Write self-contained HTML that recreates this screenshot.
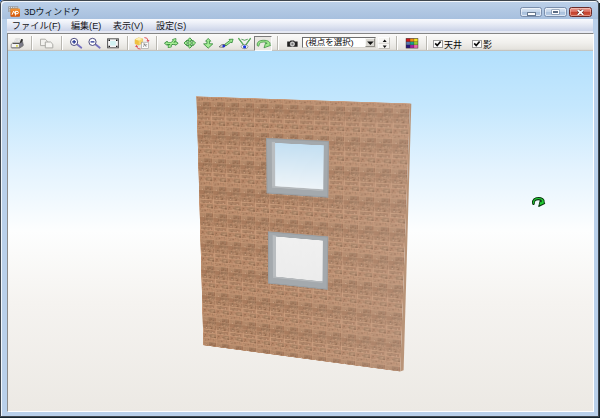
<!DOCTYPE html>
<html lang="ja"><head><meta charset="utf-8"><title>3Dウィンドウ</title>
<style>
html,body{margin:0;padding:0}
body{width:600px;height:418px;overflow:hidden;background:#16262e;position:relative;font-family:"Liberation Sans",sans-serif;font-size:9px}
.abs{position:absolute}
.vh{position:absolute;left:0;top:0;width:1px;height:1px;overflow:hidden;clip-path:inset(50%);white-space:nowrap;color:transparent;font-size:1px}
#win{position:absolute;left:0;top:0;width:599.4px;height:417.4px;border-radius:4px 4px 0 0;
 background:#b9d0ea;overflow:hidden}
#frame{position:absolute;left:0;top:0;width:599.4px;height:417.4px;border-radius:4px 4px 0 0;box-shadow:inset 0 0 0 1px #3f464e,inset 2px 2px 0 0 rgba(255,255,255,.8);pointer-events:none}
#title{position:absolute;left:0;top:0;width:600px;height:19px;background:linear-gradient(#bed2ea 0,#b3c9e4 45%,#a7c0de 100%)}
#menubar{position:absolute;left:7px;top:18.8px;width:586px;height:12.4px;background:linear-gradient(#f8f9fd 0,#edf0f8 30%,#dce2f0 65%,#cbd3e8 100%)}
#menugap{position:absolute;left:7px;top:31.2px;width:586px;height:2px;background:#e6e9f3}
#client{position:absolute;left:6.6px;top:32.6px;width:587.1px;height:379.5px;box-sizing:border-box;border:1px solid;border-color:#858585 #fff #fff #8c8c8c;background:#fff}
#toolbar{position:absolute;left:7.6px;top:33.6px;width:585.1px;height:17.2px;background:linear-gradient(#fbfaf9 0,#f1f0ed 50%,#e4e2dd 90%,#b9b7b2 100%)}
#view{position:absolute;left:7.6px;top:50.8px;width:585.1px;height:360.7px;background:linear-gradient(#b3e0fd 0,#c4e7fd 15%,#e4f3fe 33%,#fdfefe 50%,#f5f3f0 70%,#ece9e4 100%)}
.wall{position:absolute;left:0;top:0;width:216px;height:258px;transform-origin:0 0}
.wall svg{display:block}
.sep{position:absolute;top:36px;height:14px;width:1px;background:#b9b7b1;box-shadow:1px 0 0 #fff}
.pressed{position:absolute;box-sizing:border-box;background:#e9e7e2;border:1px solid;border-color:#7c7c7c #fbfbfb #fbfbfb #7c7c7c}
.combo{position:absolute;box-sizing:border-box;background:#fff;border:1px solid;border-color:#6e6e6e #d8d6d0 #d8d6d0 #6e6e6e}
.combo .dd{position:absolute;right:0;top:.400px;width:10.6px;height:9.1px;box-sizing:border-box;background:#dad8d2;border:1px solid;border-color:#f6f6f4 #8f8d87 #8f8d87 #f6f6f4}
.spin{position:absolute;box-sizing:border-box;background:#f7f6f3;border:1px solid;border-color:#fdfdfd #c3c1bb #c3c1bb #fdfdfd}
.cb{position:absolute;width:9.6px;height:8px;box-sizing:border-box;background:#fff;border:1px solid #9c9c9c}
.wb{position:absolute;top:6.6px;height:10.8px;box-sizing:border-box;border:1px solid #7a8eac;border-radius:2.5px;
 background:linear-gradient(#dbe6f3 0,#c3d4e9 48%,#a9c0dc 52%,#b9cde6 100%);box-shadow:inset 0 0 0 1px rgba(255,255,255,.55)}
.wb.close{border-color:#6a2a28;background:linear-gradient(#e9a196 0,#d8685a 48%,#c2402e 52%,#cf5a40 100%);box-shadow:inset 0 0 0 1px rgba(255,220,210,.45)}
.min{position:absolute;left:6.3px;top:4.7px;width:7.6px;height:1.9px;background:#fff;border:.400px solid #66788f;border-radius:.500px}
.max{position:absolute;left:6.9px;top:2.1px;width:7px;height:4px;box-sizing:border-box;border:1.1px solid #fff;box-shadow:0 0 0 .500px #66788f;background:#5b6c84}
.lbl svg text{font-family:"Liberation Sans","Noto Sans CJK JP",sans-serif}
</style></head>
<body>
<div class="abs" style="left:0;top:0;width:3px;height:3px;background:#1a5fc8"></div><div class="abs" style="right:0;top:0;width:3px;height:3px;background:#f4f4f4"></div>
<div id="win">
<div id="title"><div class="wb" style="left:519.5px;width:22.2px"><div class="min"></div></div><div class="wb" style="left:544.2px;width:22.5px"><div class="max"></div></div><div class="wb close" style="left:569.2px;width:23.3px"><svg width="23" height="10" viewBox="0 0 23 10" style="position:absolute;left:0;top:0" aria-hidden="true"><path d="M7.7 2l5.6 4.8M13.3 2l-5.6 4.8" stroke="#5a1a14" stroke-width="2.8"/><path d="M7.7 2l5.6 4.8M13.3 2l-5.6 4.8" stroke="#fff" stroke-width="1.7"/></svg></div></div>
<div id="menubar"></div><div id="menugap"></div>
<div id="client"></div>
<div id="toolbar"></div>
<div id="view"></div>
<svg class="abs" style="left:0;top:0" width="600" height="418" viewBox="0 0 600 418" aria-hidden="true"><polygon points="409.9,103.4 411.3,103.7 403.6,370.2 400.2,371.6" fill="#b99478"/></svg>
<div class="wall" style="width:444.0px;height:528.0px;transform:matrix3d(0.41904212,-0.0025855527,0,-0.00018395298,0.045014225,0.53632796,0,0.00015571915,0,0,1,0,196.3,96.3,0,1) translate(-6px,-6px)"><svg width="444.0" height="528.0" viewBox="-3 -3 222.0 264.0" aria-hidden="true"><defs><pattern id="bk" width="15.4" height="27.6" patternUnits="userSpaceOnUse"><rect width="15.4" height="27.6" fill="rgb(176,132,100)"/><rect x="-0.11" y="0.0" width="7.81" height="4.6" fill="rgb(176,132,101)"/><rect x="7.7" y="0.0" width="7.59" height="4.6" fill="rgb(180,133,100)"/><rect x="15.29" y="0.0" width="7.81" height="4.6" fill="rgb(178,135,103)"/><rect x="12.0" y="0.52" width="1.76" height="1.78" fill="rgb(183,140,108)" opacity="0.77"/><rect x="5.5" y="1.74" width="2.23" height="0.87" fill="rgb(145,99,70)" opacity="0.9"/><rect x="8.83" y="2.85" width="2.25" height="1.37" fill="rgb(190,146,113)" opacity="0.72"/><rect x="9.86" y="1.75" width="1.78" height="1.82" fill="rgb(189,139,106)" opacity="0.61"/><rect x="11.43" y="1.94" width="2.13" height="1.24" fill="rgb(158,120,91)" opacity="0.67"/><rect x="14.71" y="3.08" width="2.38" height="0.86" fill="rgb(154,112,82)" opacity="0.82"/><rect x="5.88" y="2.13" width="1.33" height="0.9" fill="rgb(141,99,71)" opacity="0.93"/><rect x="11.43" y="0.6" width="0.92" height="1.31" fill="rgb(143,103,74)" opacity="0.81"/><rect x="2.09" y="1.93" width="1.51" height="1.23" fill="rgb(149,115,86)" opacity="0.5"/><rect x="13.18" y="3.51" width="0.93" height="1.01" fill="rgb(203,162,128)" opacity="0.77"/><rect x="8.46" y="0.34" width="1.31" height="1.65" fill="rgb(154,111,82)" opacity="0.63"/><rect x="0.2" y="0.51" width="1.49" height="1.48" fill="rgb(159,113,83)" opacity="0.76"/><rect x="12.65" y="0.66" width="1.15" height="1.8" fill="rgb(184,143,111)" opacity="0.61"/><rect x="2.11" y="2.71" width="1.52" height="1.33" fill="rgb(143,98,70)" opacity="0.52"/><rect x="0.79" y="1.94" width="2.03" height="1.08" fill="rgb(185,144,112)" opacity="0.77"/><rect y="-0.3" width="15.4" height="0.65" fill="rgb(206,156,122)" opacity="0.42"/><rect x="7.4" y="0.0" width="0.65" height="4.6" fill="rgb(206,156,122)" opacity="0.34"/><rect x="14.99" y="0.0" width="0.65" height="4.6" fill="rgb(206,156,122)" opacity="0.48"/><rect x="-1.54" y="4.6" width="8.2" height="4.6" fill="rgb(182,139,106)"/><rect x="6.67" y="4.6" width="7.2" height="4.6" fill="rgb(164,125,95)"/><rect x="13.86" y="4.6" width="8.2" height="4.6" fill="rgb(161,114,84)"/><rect x="3.41" y="6.32" width="1.35" height="1.38" fill="rgb(158,122,93)" opacity="0.54"/><rect x="1.27" y="6.33" width="2.01" height="1.44" fill="rgb(195,145,111)" opacity="0.52"/><rect x="-0.71" y="7.89" width="0.93" height="1.5" fill="rgb(203,155,121)" opacity="0.83"/><rect x="4.23" y="8.2" width="1.49" height="0.85" fill="rgb(149,113,84)" opacity="0.83"/><rect x="1.12" y="8.08" width="2.0" height="1.79" fill="rgb(188,147,114)" opacity="0.69"/><rect x="11.96" y="7.74" width="1.51" height="1.44" fill="rgb(145,106,77)" opacity="0.54"/><rect x="9.49" y="8.18" width="1.52" height="1.61" fill="rgb(197,152,118)" opacity="0.7"/><rect x="12.75" y="5.08" width="1.04" height="0.82" fill="rgb(152,117,87)" opacity="0.55"/><rect x="11.79" y="7.04" width="0.92" height="1.13" fill="rgb(186,143,110)" opacity="0.59"/><rect x="1.78" y="7.88" width="1.29" height="1.25" fill="rgb(191,143,110)" opacity="0.79"/><rect x="12.18" y="7.37" width="1.52" height="1.44" fill="rgb(138,97,69)" opacity="0.56"/><rect x="7.14" y="7.65" width="2.42" height="1.1" fill="rgb(142,99,70)" opacity="0.7"/><rect x="3.51" y="5.53" width="1.73" height="1.54" fill="rgb(189,146,113)" opacity="0.88"/><rect x="9.25" y="5.89" width="1.87" height="1.55" fill="rgb(153,109,80)" opacity="0.66"/><rect x="9.65" y="6.72" width="1.2" height="1.65" fill="rgb(150,106,77)" opacity="0.85"/><rect y="4.3" width="15.4" height="0.65" fill="rgb(206,156,122)" opacity="0.55"/><rect x="6.37" y="4.6" width="0.65" height="4.6" fill="rgb(206,156,122)" opacity="0.55"/><rect x="13.56" y="4.6" width="0.65" height="4.6" fill="rgb(206,156,122)" opacity="0.33"/><rect x="-0.94" y="9.2" width="7.77" height="4.6" fill="rgb(168,121,90)"/><rect x="6.83" y="9.2" width="7.63" height="4.6" fill="rgb(162,123,93)"/><rect x="14.46" y="9.2" width="7.77" height="4.6" fill="rgb(164,124,94)"/><rect x="11.38" y="11.22" width="1.34" height="1.18" fill="rgb(155,116,87)" opacity="0.73"/><rect x="9.08" y="11.97" width="2.02" height="1.05" fill="rgb(200,152,118)" opacity="0.9"/><rect x="5.36" y="10.93" width="2.36" height="1.21" fill="rgb(144,105,77)" opacity="0.9"/><rect x="12.07" y="12.61" width="2.47" height="0.91" fill="rgb(187,147,114)" opacity="0.86"/><rect x="14.16" y="9.82" width="2.47" height="1.88" fill="rgb(138,99,71)" opacity="0.86"/><rect x="4.25" y="12.49" width="1.03" height="1.28" fill="rgb(151,111,82)" opacity="0.85"/><rect x="6.99" y="9.5" width="0.96" height="1.39" fill="rgb(149,111,82)" opacity="0.91"/><rect x="6.72" y="12.8" width="1.69" height="1.84" fill="rgb(202,150,116)" opacity="0.6"/><rect x="7.64" y="10.39" width="2.25" height="1.42" fill="rgb(147,104,76)" opacity="0.67"/><rect x="12.86" y="12.46" width="1.13" height="1.4" fill="rgb(152,109,79)" opacity="0.72"/><rect x="5.74" y="9.79" width="0.94" height="1.87" fill="rgb(145,105,77)" opacity="0.68"/><rect x="12.14" y="11.31" width="1.17" height="1.82" fill="rgb(182,137,105)" opacity="0.91"/><rect x="12.13" y="10.77" width="1.1" height="1.28" fill="rgb(148,111,83)" opacity="0.91"/><rect x="6.82" y="10.48" width="0.95" height="1.09" fill="rgb(149,111,82)" opacity="0.94"/><rect x="-0.42" y="9.93" width="1.42" height="1.19" fill="rgb(143,105,76)" opacity="0.55"/><rect y="8.9" width="15.4" height="0.65" fill="rgb(206,156,122)" opacity="0.53"/><rect x="6.53" y="9.2" width="0.65" height="4.6" fill="rgb(206,156,122)" opacity="0.33"/><rect x="14.16" y="9.2" width="0.65" height="4.6" fill="rgb(206,156,122)" opacity="0.43"/><rect x="-1.16" y="13.8" width="8.26" height="4.6" fill="rgb(168,124,93)"/><rect x="7.1" y="13.8" width="7.14" height="4.6" fill="rgb(167,125,94)"/><rect x="14.24" y="13.8" width="8.26" height="4.6" fill="rgb(159,114,84)"/><rect x="9.35" y="16.17" width="1.88" height="1.74" fill="rgb(139,97,69)" opacity="0.83"/><rect x="12.29" y="17.07" width="2.33" height="1.01" fill="rgb(194,151,118)" opacity="0.59"/><rect x="0.59" y="17.02" width="1.32" height="0.91" fill="rgb(142,106,78)" opacity="0.69"/><rect x="11.95" y="14.43" width="2.18" height="0.91" fill="rgb(195,149,116)" opacity="0.66"/><rect x="12.46" y="15.23" width="2.0" height="1.01" fill="rgb(192,141,108)" opacity="0.55"/><rect x="-0.39" y="15.88" width="1.2" height="1.02" fill="rgb(183,142,110)" opacity="0.95"/><rect x="14.2" y="14.32" width="1.99" height="0.89" fill="rgb(156,110,80)" opacity="0.68"/><rect x="5.99" y="15.21" width="0.92" height="1.57" fill="rgb(145,109,81)" opacity="0.58"/><rect x="6.44" y="16.51" width="1.87" height="0.9" fill="rgb(202,158,124)" opacity="0.65"/><rect x="0.39" y="16.86" width="1.21" height="1.44" fill="rgb(193,145,112)" opacity="0.84"/><rect x="3.58" y="14.4" width="1.55" height="1.79" fill="rgb(140,105,77)" opacity="0.81"/><rect x="11.58" y="16.6" width="1.2" height="1.68" fill="rgb(184,137,105)" opacity="0.55"/><rect x="13.56" y="17.37" width="2.41" height="1.53" fill="rgb(154,111,81)" opacity="0.8"/><rect x="8.34" y="15.81" width="1.7" height="1.03" fill="rgb(192,142,108)" opacity="0.68"/><rect x="8.43" y="14.39" width="1.31" height="1.24" fill="rgb(142,97,68)" opacity="0.59"/><rect y="13.5" width="15.4" height="0.65" fill="rgb(206,156,122)" opacity="0.44"/><rect x="6.8" y="13.8" width="0.65" height="4.6" fill="rgb(206,156,122)" opacity="0.32"/><rect x="13.94" y="13.8" width="0.65" height="4.6" fill="rgb(206,156,122)" opacity="0.36"/><rect x="-6.63" y="18.4" width="7.61" height="4.6" fill="rgb(185,140,108)"/><rect x="0.97" y="18.4" width="7.79" height="4.6" fill="rgb(185,142,109)"/><rect x="8.77" y="18.4" width="7.61" height="4.6" fill="rgb(180,131,99)"/><rect x="8.8" y="21.18" width="2.4" height="1.22" fill="rgb(150,115,86)" opacity="0.89"/><rect x="7.89" y="20.63" width="1.57" height="1.38" fill="rgb(202,156,122)" opacity="0.66"/><rect x="3.69" y="20.83" width="2.1" height="0.83" fill="rgb(195,153,119)" opacity="0.76"/><rect x="9.38" y="19.99" width="1.4" height="1.24" fill="rgb(181,137,105)" opacity="0.83"/><rect x="4.24" y="21.31" width="1.66" height="1.87" fill="rgb(149,106,77)" opacity="0.74"/><rect x="14.37" y="21.06" width="2.44" height="1.07" fill="rgb(183,141,108)" opacity="0.52"/><rect x="5.84" y="19.0" width="1.15" height="1.2" fill="rgb(151,106,77)" opacity="0.69"/><rect x="8.86" y="20.77" width="2.09" height="1.7" fill="rgb(188,139,106)" opacity="0.63"/><rect x="1.11" y="20.24" width="1.9" height="1.2" fill="rgb(198,149,115)" opacity="0.81"/><rect x="8.26" y="20.61" width="1.2" height="1.07" fill="rgb(198,157,123)" opacity="0.91"/><rect x="13.41" y="18.73" width="1.32" height="0.83" fill="rgb(159,112,82)" opacity="0.6"/><rect x="3.56" y="21.17" width="1.91" height="1.21" fill="rgb(146,106,77)" opacity="0.59"/><rect x="4.64" y="21.13" width="1.62" height="1.7" fill="rgb(140,105,77)" opacity="0.85"/><rect x="6.29" y="21.14" width="1.49" height="1.52" fill="rgb(199,158,124)" opacity="0.65"/><rect x="8.0" y="21.14" width="1.49" height="0.91" fill="rgb(149,113,84)" opacity="0.54"/><rect y="18.1" width="15.4" height="0.65" fill="rgb(206,156,122)" opacity="0.37"/><rect x="0.67" y="18.4" width="0.65" height="4.6" fill="rgb(206,156,122)" opacity="0.44"/><rect x="8.47" y="18.4" width="0.65" height="4.6" fill="rgb(206,156,122)" opacity="0.42"/><rect x="-7.26" y="23.0" width="7.33" height="4.6" fill="rgb(161,116,86)"/><rect x="0.07" y="23.0" width="8.07" height="4.6" fill="rgb(180,131,99)"/><rect x="8.14" y="23.0" width="7.33" height="4.6" fill="rgb(168,128,97)"/><rect x="10.38" y="24.16" width="1.95" height="1.16" fill="rgb(154,118,88)" opacity="0.65"/><rect x="6.23" y="25.22" width="2.18" height="1.14" fill="rgb(190,142,109)" opacity="0.68"/><rect x="14.33" y="26.24" width="2.23" height="0.83" fill="rgb(157,118,88)" opacity="0.76"/><rect x="12.06" y="25.71" width="1.76" height="1.72" fill="rgb(199,153,119)" opacity="0.58"/><rect x="11.45" y="26.2" width="1.25" height="0.86" fill="rgb(199,148,114)" opacity="0.63"/><rect x="-0.63" y="26.06" width="1.77" height="1.67" fill="rgb(181,132,100)" opacity="0.54"/><rect x="11.09" y="26.26" width="1.95" height="0.91" fill="rgb(159,121,91)" opacity="0.69"/><rect x="10.68" y="24.86" width="1.53" height="1.17" fill="rgb(198,157,123)" opacity="0.8"/><rect x="7.1" y="25.03" width="2.36" height="1.25" fill="rgb(143,107,78)" opacity="0.8"/><rect x="13.0" y="25.94" width="2.43" height="1.5" fill="rgb(138,99,71)" opacity="0.82"/><rect x="12.16" y="24.63" width="1.29" height="0.98" fill="rgb(201,156,122)" opacity="0.81"/><rect x="4.26" y="24.52" width="2.32" height="1.32" fill="rgb(186,144,111)" opacity="0.64"/><rect x="1.55" y="26.33" width="0.93" height="1.33" fill="rgb(141,105,77)" opacity="0.64"/><rect x="2.24" y="24.42" width="1.66" height="1.36" fill="rgb(145,104,76)" opacity="0.9"/><rect x="5.6" y="26.3" width="2.41" height="1.41" fill="rgb(195,153,119)" opacity="0.72"/><rect y="22.7" width="15.4" height="0.65" fill="rgb(206,156,122)" opacity="0.45"/><rect x="-0.23" y="23.0" width="0.65" height="4.6" fill="rgb(206,156,122)" opacity="0.54"/><rect x="7.84" y="23.0" width="0.65" height="4.6" fill="rgb(206,156,122)" opacity="0.47"/><rect x="0.9" y="18.9" width="13.6" height="3.6" fill="rgb(156,114,85)" opacity=".5" stroke="rgb(214,165,130)" stroke-width=".75"/><rect y="0" width="15.4" height="5.06" fill="rgb(204,156,122)" opacity=".2"/><rect y="5.52" width="15.4" height="4.6" fill="rgb(140,100,72)" opacity=".14"/><rect x="-0.1" width="0.8" height="27.6" fill="rgb(210,162,127)" opacity=".4"/><rect y="-0.1" width="15.4" height="0.9" fill="rgb(214,165,130)" opacity=".45"/><circle cx="4.2" cy="8.6" r="0.75" fill="#d8b092" opacity=".6"/><circle cx="4.4" cy="16.8" r="0.75" fill="#d8b092" opacity=".6"/><circle cx="11.6" cy="21.5" r="0.75" fill="#d8b092" opacity=".6"/></pattern></defs><rect width="216.0" height="258.0" fill="url(#bk)"/><linearGradient id="wl" x1="0" y1="0" x2="1" y2="0"><stop offset="0" stop-color="#c8b4ac" stop-opacity="0"/><stop offset=".45" stop-color="#c8b4ac" stop-opacity=".06"/><stop offset="1" stop-color="#ccb8b0" stop-opacity=".24"/></linearGradient><rect width="216.0" height="258.0" fill="url(#wl)"/><rect x="74.3" y="37.1" width="64.58" height="53.98" fill="#9a9fa3"/><rect x="75.5" y="38.3" width="62.18" height="51.58" fill="#a4a9ad"/><rect x="80.2" y="40.44" width="3.4" height="43.92" fill="#b9bdc0"/><rect x="80.2" y="83.36" width="53.45" height="1.6" fill="#b4b8bb"/><linearGradient id="g1" x1="0" y1="0" x2="0" y2="1"><stop offset="0" stop-color="#c3dff2"/><stop offset="1" stop-color="#eef4f8"/></linearGradient><rect x="83.6" y="41.44" width="50.05" height="41.92" fill="url(#g1)"/><rect x="75.45" y="128.93" width="63.92" height="53.73" fill="#9a9fa3"/><rect x="76.65" y="130.13" width="61.52" height="51.33" fill="#a4a9ad"/><rect x="80.64" y="132.51" width="3.4" height="43.04" fill="#b9bdc0"/><rect x="80.64" y="174.55" width="53.14" height="1.6" fill="#b4b8bb"/><linearGradient id="g2" x1="0" y1="0" x2="0" y2="1"><stop offset="0" stop-color="#f0f0f0"/><stop offset="1" stop-color="#ececec"/></linearGradient><rect x="84.04" y="133.51" width="49.74" height="41.04" fill="url(#g2)"/></svg></div>
<svg aria-hidden="true" style="position:absolute;left:531px;top:196px;overflow:visible" width="16" height="12" viewBox="531 196 16 12" ><g transform="translate(538.35 201.9) scale(0.91 1.18)"><path d="M-6.4 1 C-6.8-2-4.1-3.7 0-3.7 C4-3.7 7-2.2 6.4.4 L7 1.4 L.4 3.8 L2-1.1 L3.3-.2 C3.7-1.3 2.2-1.95 0-1.95 C-2.7-1.95-4.6-1-4.45 1.1 C-4.35 2.5-6.2 2.7-6.4 1Z" fill="#22cc33" stroke="#0a3a10" stroke-width="1.0" stroke-linejoin="round"/></g></svg>
<svg aria-hidden="true" style="position:absolute;left:8px;top:6px;overflow:visible" width="13" height="11" viewBox="8 6 13 11" ><rect x="8.4" y="6.4" width="9.8" height="5.6" fill="#8b8b8b"/><path d="M9.2 7.4h1M11 7.4h1M12.8 7.4h1M14.6 7.4h1M16.4 7.4h1M9.2 9.2h1M9.2 11h1" stroke="#eee" stroke-width="1"/><defs><linearGradient id="og" x1="0" y1="0" x2="0" y2="1"><stop offset="0" stop-color="#f59a3a"/><stop offset="1" stop-color="#d24e00"/></linearGradient></defs><rect x="10.4" y="8.4" width="9.6" height="8.4" rx="1" fill="url(#og)"/><path d="M12 14.8l1.6-3.6 1.2 2.4M15.4 11.4h1.6q1.4 0 1.4 1.2t-1.4 1.2h-1.6v-2.4v4.2" stroke="#fff" stroke-width="1" fill="none"/></svg><svg aria-hidden="true" style="position:absolute;left:10px;top:38px;overflow:visible" width="15" height="11" viewBox="10 38 15 11" ><path d="M11.6 48h8.2l3.6-2.4" stroke="#6a6a6a" stroke-width=".9" fill="none" opacity=".8"/><path d="M14.7 41.8l.9-3.1h4.3l-.7 3.1z" fill="#fff" stroke="#b4b4b4" stroke-width=".4"/><path d="M16 39.7h2.8M15.8 40.7h2.8" stroke="#aaa" stroke-width=".4"/><path d="M19.3 43.4l1.9-4.3 1.7.2-.2 1.8-1.5 2.7z" fill="#2e2e2e"/><path d="M19.4 43.4l3.2-1.7.8 3.5-4 2.4z" fill="#7c7c8a" stroke="#4a4a4a" stroke-width=".45"/><path d="M12.5 43.2l6.9.2v4.2h-8.2v-3.2z" fill="#f4f4f4" stroke="#5c5c5c" stroke-width=".6"/><path d="M12.7 43.3h6.7" stroke="#2c2c2c" stroke-width=".85"/><rect x="16.2" y="45" width="1.5" height="1.8" fill="#d8d030"/></svg><svg aria-hidden="true" style="position:absolute;left:39px;top:38px;overflow:visible" width="15" height="11" viewBox="39 38 15 11" ><path d="M40.5 39.2h4.8l2 2v4.4h-6.8z" fill="#f2f1ee" stroke="#a9a8a4" stroke-width=".9"/><path d="M45.3 42h5.3l2.2 2.2v3.7h-7.5z" fill="#f6f5f2" stroke="#a2a19d" stroke-width=".9"/></svg><svg aria-hidden="true" style="position:absolute;left:69px;top:37px;overflow:visible" width="15" height="13" viewBox="69 37 15 13" ><path d="M77.0 44.3l4.3 3.5" stroke="#7470c0" stroke-width="1.8" stroke-linecap="round"/><circle cx="74.1" cy="41.9" r="3.6" fill="#fff" stroke="#3a3a70" stroke-width=".9"/><path d="M72.19999999999999 41.9h3.8" stroke="#1c2a8c" stroke-width="1.2"/><path d="M74.1 40v3.8" stroke="#1c2a8c" stroke-width="1.2"/></svg><svg aria-hidden="true" style="position:absolute;left:87px;top:37px;overflow:visible" width="15" height="13" viewBox="87 37 15 13" ><path d="M95.4 44.3l4.3 3.5" stroke="#7470c0" stroke-width="1.8" stroke-linecap="round"/><circle cx="92.5" cy="41.9" r="3.6" fill="#fff" stroke="#3a3a70" stroke-width=".9"/><path d="M90.6 41.9h3.8" stroke="#1c2a8c" stroke-width="1.2"/></svg><svg aria-hidden="true" style="position:absolute;left:106px;top:37px;overflow:visible" width="14" height="12" viewBox="106 37 14 12" ><rect x="107.6" y="38.8" width="10.8" height="9" fill="#f6f6f6" stroke="#555" stroke-width="1"/><rect x="110.2" y="41" width="5.6" height="4.6" fill="#d2f2f2"/><path d="M108.5 39.6h1.5v1.3h-1.5zM116 39.6h1.5v1.3h-1.5zM108.5 45.7h1.5v1.3h-1.5zM116 45.7h1.5v1.3h-1.5z" fill="#1a1a1a"/></svg><svg aria-hidden="true" style="position:absolute;left:133px;top:36px;overflow:visible" width="18" height="15" viewBox="133 36 18 15" ><path d="M135 39.6l3.6-1.8 4 1v4.2l-3.8 2-3.8-1.2z" fill="#f6d66a" stroke="#d8aa30" stroke-width=".45"/><path d="M135 39.6l3.6-1.8 4 1-3.8 2z" fill="#fcefb4"/><path d="M135 39.6l3.8 1.2v4.2l-3.8-1.2z" fill="#f0c040"/><rect x="141.6" y="42.2" width="6.8" height="6.4" fill="#fcfcfc" stroke="#9a9a9a" stroke-width=".6"/><path d="M143.4 46.8l1.4-2.6 1.4 2.6M145.8 44.8h1.4M143.2 44h2" stroke="#555" stroke-width=".6" fill="none"/><path d="M144.4 37.6q3.2-.2 3.6 2.8" stroke="#e05862" stroke-width="1" fill="none"/><path d="M146.4 40.2h3.2l-1.6 1.9z" fill="#d83040"/><path d="M140.6 49q-3.4.4-4-2.6" stroke="#e05862" stroke-width="1" fill="none"/><path d="M135 46.8h3.2l-1.6-1.9z" fill="#d83040"/></svg><svg aria-hidden="true" style="position:absolute;left:164px;top:37px;overflow:visible" width="16" height="12" viewBox="164 37 16 12" ><polygon points="164.9,43.3 167.2,44.95 167.2,44.0 175.4,44.0 175.4,44.95 177.7,43.3 175.4,41.65 175.4,42.6 167.2,42.6 167.2,41.65" fill="none" stroke="#2c8534" stroke-width="1.3" stroke-linejoin="round"/><polygon points="168.4,47.4 171.15,46.73 170.43,46.11 174.73,41.1 175.45,41.72 175.7,38.9 172.95,39.57 173.67,40.19 169.37,45.2 168.65,44.58" fill="none" stroke="#2c8534" stroke-width="1.3" stroke-linejoin="round"/><polygon points="164.9,43.3 167.2,44.95 167.2,44.0 175.4,44.0 175.4,44.95 177.7,43.3 175.4,41.65 175.4,42.6 167.2,42.6 167.2,41.65" fill="#a4ec94" stroke="none" stroke-width="0.8" stroke-linejoin="round"/><polygon points="168.4,47.4 171.15,46.73 170.43,46.11 174.73,41.1 175.45,41.72 175.7,38.9 172.95,39.57 173.67,40.19 169.37,45.2 168.65,44.58" fill="#a4ec94" stroke="none" stroke-width="0.8" stroke-linejoin="round"/></svg><svg aria-hidden="true" style="position:absolute;left:183px;top:37px;overflow:visible" width="14" height="13" viewBox="183 37 14 13" ><polygon points="189.8,37.8 192.5,40.5 190.65,40.5 190.65,42.15 192.9,42.15 192.9,40.3 195.6,43.0 192.9,45.7 192.9,43.85 190.65,43.85 190.65,45.5 192.5,45.5 189.8,48.2 187.1,45.5 188.95,45.5 188.95,43.85 186.7,43.85 186.7,45.7 184.0,43.0 186.7,40.3 186.7,42.15 188.95,42.15 188.95,40.5 187.1,40.5" fill="#a4ec94" stroke="#2c8534" stroke-width="0.8" stroke-linejoin="round"/></svg><svg aria-hidden="true" style="position:absolute;left:202px;top:37px;overflow:visible" width="13" height="13" viewBox="202 37 13 13" ><polygon points="208.2,38.4 210.8,41.2 209.45,41.2 209.45,43.7 212.8,43.9 208.2,48.2 203.6,43.9 206.95,43.7 206.95,41.2 205.6,41.2" fill="#a4ec94" stroke="#2c8534" stroke-width="0.8" stroke-linejoin="round"/></svg><svg aria-hidden="true" style="position:absolute;left:218px;top:37px;overflow:visible" width="16" height="12" viewBox="218 37 16 12" ><polygon points="225.77,45.96 231.05,41.95 231.86,43.03 233.1,39.2 229.08,39.36 229.9,40.44 224.63,44.44" fill="#a4ec94" stroke="#2c8534" stroke-width="0.8" stroke-linejoin="round"/><path d="M219.3 46.9q3-4 6.5-1.5q-2.6 3-6.5 1.5z" fill="#fff" stroke="#444" stroke-width=".75"/><circle cx="223.7" cy="46.1" r="1.45" fill="#2030cc"/></svg><svg aria-hidden="true" style="position:absolute;left:237px;top:37px;overflow:visible" width="15" height="13" viewBox="237 37 15 13" ><path d="M238.4 38.2l5.8 7.6M250.7 38.2l-5.6 7.6" stroke="#2c8534" stroke-width="1.2" fill="none"/><path d="M238.4 38.2l5.8 7.6M250.7 38.2l-5.6 7.6" stroke="#a4ec94" stroke-width=".45" fill="none"/><path d="M241.4 39.2q3.2 2.2 6.4 0" stroke="#2c8534" stroke-width=".75" fill="none"/><ellipse cx="244.6" cy="46.7" rx="3.4" ry="2" fill="#fff" stroke="#666" stroke-width=".6"/><circle cx="244.6" cy="46.8" r="1.6" fill="#1838e0"/></svg><div class="pressed" style="left:254.2px;top:36.2px;width:17.8px;height:14.6px"></div><svg aria-hidden="true" style="position:absolute;left:255px;top:37px;overflow:visible" width="17" height="13" viewBox="255 37 17 13" ><g transform="translate(263.6 44) scale(1.0 1.0)"><path d="M-6.4 1 C-6.8-2-4.1-3.7 0-3.7 C4-3.7 7-2.2 6.4.4 L7 1.4 L.4 3.8 L2-1.1 L3.3-.2 C3.7-1.3 2.2-1.95 0-1.95 C-2.7-1.95-4.6-1-4.45 1.1 C-4.35 2.5-6.2 2.7-6.4 1Z" fill="#9ee88e" stroke="#2c8534" stroke-width="0.7" stroke-linejoin="round"/></g></svg><svg aria-hidden="true" style="position:absolute;left:286px;top:39px;overflow:visible" width="13" height="9" viewBox="286 39 13 9" ><path d="M287.2 41.4h2.6l.8-1h3.4l.8 1h2.8v5.4h-10.4z" fill="#222"/><circle cx="292.4" cy="44" r="2.2" fill="#b8b8b8" stroke="#eee" stroke-width=".6"/><circle cx="292.4" cy="44" r=".9" fill="#777"/></svg><div class="combo" style="left:302px;top:36.6px;width:74.2px;height:11.6px"><div class="dd"></div></div><svg aria-hidden="true" style="position:absolute;left:364px;top:38px;overflow:visible" width="12" height="10" viewBox="364 38 12 10" ><path d="M367.1 41.6h6.6l-3.3 3.5z" fill="#111"/></svg><div class="spin" style="left:378.2px;top:37.2px;width:12px;height:12px"></div><svg aria-hidden="true" style="position:absolute;left:378px;top:37px;overflow:visible" width="13" height="13" viewBox="378 37 13 13" ><path d="M382.7 42h4l-2-2.5zM382.7 45.4h4l-2 2.5z" fill="#111"/><path d="M378.6 43.3h11.2" stroke="#c8c6c0" stroke-width=".7"/></svg><svg aria-hidden="true" style="position:absolute;left:405px;top:38px;overflow:visible" width="14" height="11" viewBox="405 38 14 11" ><rect x="405.8" y="38.2" width="12.4" height="10.2" fill="#3a3030"/><rect x="406.3" y="38.7" width="3.6" height="2.9" fill="#d01818"/><rect x="410.2" y="38.7" width="3.6" height="2.9" fill="#f08a10"/><rect x="414.1" y="38.7" width="3.6" height="2.9" fill="#f0e020"/><rect x="406.3" y="41.85" width="3.6" height="2.9" fill="#5878b0"/><rect x="410.2" y="41.85" width="3.6" height="2.9" fill="#18a088"/><rect x="414.1" y="41.85" width="3.6" height="2.9" fill="#98c830"/><rect x="406.3" y="45.0" width="3.6" height="2.9" fill="#281878"/><rect x="410.2" y="45.0" width="3.6" height="2.9" fill="#a020a0"/><rect x="414.1" y="45.0" width="3.6" height="2.9" fill="#e868a8"/></svg><div class="cb" style="left:433.2px;top:39.6px"></div><svg aria-hidden="true" style="position:absolute;left:433.2px;top:39px;overflow:visible" width="10" height="10" viewBox="433.2 39 10 10" ><path d="M435.4 43.4l2 2.1 3.4-4" stroke="#0c0c0c" stroke-width="1.7" fill="none"/></svg><div class="cb" style="left:472.2px;top:39.6px"></div><svg aria-hidden="true" style="position:absolute;left:472.2px;top:39px;overflow:visible" width="10" height="10" viewBox="472.2 39 10 10" ><path d="M474.4 43.4l2 2.1 3.4-4" stroke="#0c0c0c" stroke-width="1.7" fill="none"/></svg><div class="sep" style="left:31.1px"></div><div class="sep" style="left:60.8px"></div><div class="sep" style="left:127.0px"></div><div class="sep" style="left:155.8px"></div><div class="sep" style="left:276.9px"></div><div class="sep" style="left:395.7px"></div><div class="sep" style="left:426.0px"></div>
<span class="lbl"><span class="vh">3Dウィンドウ</span><svg aria-hidden="true" style="position:absolute;left:23.1px;top:5.4px;overflow:visible" width="58.9" height="15.02" viewBox="23.1 5.4 58.9 15.02" ><text x="24.3" y="15.7" font-size="9" fill="#0c1420" textLength="55.8" lengthAdjust="spacingAndGlyphs">3Dウィンドウ</text></svg></span><span class="lbl"><span class="vh">ファイル(F)</span><svg aria-hidden="true" style="position:absolute;left:9.7px;top:18.7px;overflow:visible" width="52.2" height="14.88" viewBox="9.7 18.7 52.2 14.88" ><text x="11.4" y="28.9" font-size="9" fill="#141420" textLength="49" lengthAdjust="spacingAndGlyphs">ファイル(F)</text></svg></span><span class="lbl"><span class="vh">編集(E)</span><svg aria-hidden="true" style="position:absolute;left:70.2px;top:18.7px;overflow:visible" width="32.66" height="14.88" viewBox="70.2 18.7 32.66 14.88" ><text x="71.2" y="28.9" font-size="9" fill="#141420" textLength="30.2" lengthAdjust="spacingAndGlyphs">編集(E)</text></svg></span><span class="lbl"><span class="vh">表示(V)</span><svg aria-hidden="true" style="position:absolute;left:111.7px;top:18.7px;overflow:visible" width="32.66" height="14.88" viewBox="111.7 18.7 32.66 14.88" ><text x="112.7" y="28.9" font-size="9" fill="#141420" textLength="30.2" lengthAdjust="spacingAndGlyphs">表示(V)</text></svg></span><span class="lbl"><span class="vh">設定(S)</span><svg aria-hidden="true" style="position:absolute;left:154.7px;top:18.7px;overflow:visible" width="32.66" height="14.88" viewBox="154.7 18.7 32.66 14.88" ><text x="155.7" y="28.9" font-size="9" fill="#141420" textLength="30.2" lengthAdjust="spacingAndGlyphs">設定(S)</text></svg></span><span class="lbl"><span class="vh">(視点を選択)</span><svg aria-hidden="true" style="position:absolute;left:303px;top:37px;overflow:visible" width="54" height="12" viewBox="303 37 54 12" ><text x="305.4" y="45.4" font-size="8" fill="#0a0a0a" textLength="48.2" lengthAdjust="spacingAndGlyphs">(視点を選択)</text></svg></span><span class="lbl"><span class="vh">天井</span><svg aria-hidden="true" style="position:absolute;left:443.0px;top:37.7px;overflow:visible" width="20.44" height="14.18" viewBox="443.0 37.7 20.44 14.18" ><text x="444.1" y="47.5" font-size="9" fill="#0a0a0a">天井</text></svg></span><span class="lbl"><span class="vh">影</span><svg aria-hidden="true" style="position:absolute;left:482.2px;top:37.7px;overflow:visible" width="11.05" height="14.18" viewBox="482.2 37.7 11.05 14.18" ><text x="483.3" y="47.5" font-size="9" fill="#0a0a0a">影</text></svg></span>
<div id="frame"></div>
</div>
</body></html>
